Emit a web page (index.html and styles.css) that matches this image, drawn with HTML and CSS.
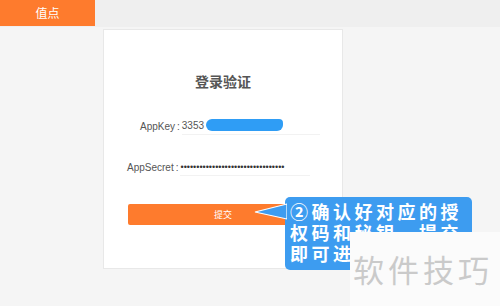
FILE: index.html
```html
<!DOCTYPE html>
<html lang="zh">
<head>
<meta charset="utf-8">
<link rel="stylesheet" href="styles.css">
</head>
<body>
<div class="topbar"><div class="tab">值点</div></div>
<div class="card">
  <h1 class="title">登录验证</h1>
  <div class="row row-key">
    <span class="label">AppKey<span class="colon">:</span></span>
    <span class="field">3353<span class="redact"></span></span>
  </div>
  <div class="row row-secret">
    <span class="label">AppSecret<span class="colon">:</span></span>
    <span class="field dots">•••••••••••••••••••••••••••••••••</span>
  </div>
  <div class="btn">提交</div>
</div>
<div class="callout">
  <svg class="tail" width="34" height="20" viewBox="0 0 34 20"><path d="M34 2 L2 10 L34 17 Z" fill="#3d9cf0" stroke="#ffffff" stroke-width="1.2"/></svg>
  <p class="callout-text">②确认好对应的授权码和秘钥，提交即可进入</p>
</div>
<div class="watermark">软件技巧</div>
</body>
</html>
```
FILE: styles.css
```css
html, body {
  margin: 0;
  padding: 0;
}
body {
  width: 500px;
  height: 306px;
  background: #f5f5f5;
  font-family: "Liberation Sans", Arial, "Noto Sans CJK SC", sans-serif;
  overflow: hidden;
  position: relative;
}
.topbar {
  height: 27px;
  background: #efefef;
}
.tab {
  width: 95px;
  height: 26px;
  background: #fe7b2d;
  color: #fff;
  font-size: 12px;
  line-height: 26px;
  text-align: center;
  font-family: "Noto Sans CJK SC", sans-serif;
}
.card {
  margin: 2px 0 0 103px;
  width: 240px;
  height: 240px;
  background: #fff;
  border: 1px solid #e8e8e8;
  padding-top: 41px;
  box-sizing: border-box;
}
.title {
  margin: 0;
  font-size: 14px;
  line-height: 20px;
  font-weight: bold;
  color: #555;
  text-align: center;
  font-family: "Noto Sans CJK SC", sans-serif;
}
.row {
  display: flex;
  align-items: center;
  height: 16px;
  font-size: 10px;
  color: #555;
}
.row-key {
  margin-top: 27px;
  padding-left: 36px;
}
.row-secret {
  margin-top: 25px;
  padding-left: 23px;
}
.colon {
  margin: 0 2px 0 2px;
}
.field {
  position: relative;
  display: flex;
  align-items: center;
  height: 16px;
  border-bottom: 1px solid #f2f2f2;
}
.row-key .field {
  width: 138px;
}
.row-secret .field {
  width: 130px;
}
.dots {
  font-size: 9px;
  color: #333;
}
.redact {
  position: absolute;
  left: 24px;
  top: 1px;
  width: 77px;
  height: 12px;
  background: #2f9df5;
  border-radius: 6px 4px 6px 6px;
}
.btn {
  margin: 29px 0 0 24px;
  width: 190px;
  height: 21px;
  background: #fe7b2d;
  border-radius: 2px;
  color: #fff;
  font-size: 9px;
  line-height: 21px;
  text-align: center;
  font-family: "Noto Sans CJK SC", sans-serif;
}
.callout {
  position: absolute;
  left: 285px;
  top: 197px;
  width: 187px;
  height: 73px;
  background: #3d9cf0;
  border-radius: 5px;
  box-sizing: border-box;
  padding: 4px 4px 0 5px;
}
.tail {
  position: absolute;
  left: -32px;
  top: 5px;
}
.callout-text {
  margin: 0;
  color: #fff;
  font-family: "Noto Sans CJK SC", sans-serif;
  font-weight: bold;
  font-size: 18px;
  line-height: 21px;
  letter-spacing: 3.5px;
  height: 66px;
  overflow: hidden;
}
.watermark {
  position: absolute;
  left: 350px;
  top: 232px;
  width: 150px;
  height: 74px;
  background: #fbfbfb;
  color: #cacaca;
  font-family: "Noto Sans CJK SC", sans-serif;
  font-size: 31px;
  line-height: 74px;
  letter-spacing: 4px;
  padding-left: 3px;
  box-sizing: border-box;
  white-space: nowrap;
}
```
